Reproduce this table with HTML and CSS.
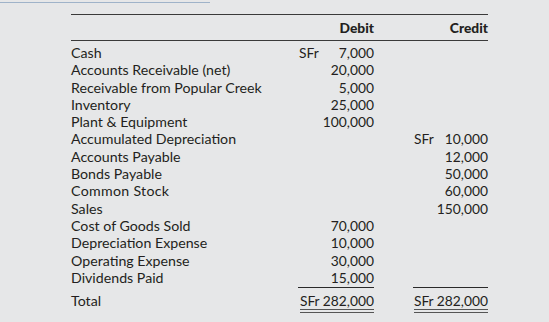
FILE: index.html
```html
<!DOCTYPE html>
<html>
<head>
<meta charset="utf-8">
<link rel="stylesheet" href="styles.css">
</head>
<body>
<div class="intro"><span class="intro-text">er, trial balance in SFr is as follows:</span></div>
<div class="ledger">
  <div class="row head">
    <div class="label"></div>
    <div class="amt hd">Debit</div>
    <div class="spacer"></div>
    <div class="amt hd">Credit</div>
  </div>
  <div class="body">
    <div class="row"><div class="label">Cash</div><div class="amt split"><span>SFr</span><span>7,000</span></div><div class="spacer"></div><div class="amt"></div></div>
    <div class="row"><div class="label">Accounts Receivable (net)</div><div class="amt">20,000</div><div class="spacer"></div><div class="amt"></div></div>
    <div class="row"><div class="label">Receivable from Popular Creek</div><div class="amt">5,000</div><div class="spacer"></div><div class="amt"></div></div>
    <div class="row"><div class="label">Inventory</div><div class="amt">25,000</div><div class="spacer"></div><div class="amt"></div></div>
    <div class="row"><div class="label">Plant &amp; Equipment</div><div class="amt">100,000</div><div class="spacer"></div><div class="amt"></div></div>
    <div class="row"><div class="label">Accumulated Depreciation</div><div class="amt"></div><div class="spacer"></div><div class="amt split"><span>SFr</span><span>10,000</span></div></div>
    <div class="row"><div class="label">Accounts Payable</div><div class="amt"></div><div class="spacer"></div><div class="amt">12,000</div></div>
    <div class="row"><div class="label">Bonds Payable</div><div class="amt"></div><div class="spacer"></div><div class="amt">50,000</div></div>
    <div class="row"><div class="label wide">Common Stock</div><div class="amt"></div><div class="spacer"></div><div class="amt">60,000</div></div>
    <div class="row"><div class="label">Sales</div><div class="amt"></div><div class="spacer"></div><div class="amt">150,000</div></div>
    <div class="row"><div class="label">Cost of Goods Sold</div><div class="amt">70,000</div><div class="spacer"></div><div class="amt"></div></div>
    <div class="row"><div class="label">Depreciation Expense</div><div class="amt">10,000</div><div class="spacer"></div><div class="amt"></div></div>
    <div class="row"><div class="label">Operating Expense</div><div class="amt">30,000</div><div class="spacer"></div><div class="amt"></div></div>
    <div class="row"><div class="label">Dividends Paid</div><div class="amt">15,000</div><div class="spacer"></div><div class="amt"></div></div>
  </div>
  <div class="row total">
    <div class="label">Total</div>
    <div class="amt sum"><span class="dbl">SFr 282,000</span></div>
    <div class="spacer"></div>
    <div class="amt sum credit-sum"><span class="dbl">SFr 282,000</span></div>
  </div>
</div>
</body>
</html>
```
FILE: styles.css
```css
html, body {
  margin: 0;
  padding: 0;
  background: #e6e7e8;
}
body {
  font-family: "Lato", "Open Sans", sans-serif;
  font-size: 14.2px;
  color: #231f20;
}
.intro {
  height: 3px;
  overflow: hidden;
}
.intro-text {
  display: inline-block;
  margin-top: -10px;
  font-family: "Liberation Serif", serif;
  font-weight: bold;
  font-size: 13.5px;
  line-height: 15px;
  background: #9fb3c9;
  color: #2b3440;
  padding-right: 4px;
}
.ledger {
  margin: 11px 0 0 71px;
  width: 417px;
  border-top: 1px solid #3a3a3a;
}
.row {
  display: grid;
  grid-template-columns: 227px 76px 39px 75px;
  line-height: 17.3px;
}
.head {
  border-bottom: 1px solid #3a3a3a;
  padding: 4px 0 4px;
  line-height: 17px;
}
.hd {
  font-weight: 900;
  text-align: center;
  font-size: 14.8px;
}
.body {
  padding-top: 3px;
}
.amt {
  text-align: right;
  font-size: 13.8px;
  white-space: nowrap;
}
.split {
  display: flex;
  justify-content: space-between;
  padding-left: 1px;
}
.wide {
  letter-spacing: 0.3px;
}
.total {
  margin-top: 1px;
  line-height: 14px;
}
.total .label {
  padding-top: 7px;
}
.sum {
  display: flex;
  justify-content: flex-end;
  border-top: 1px solid #2a2a2a;
  padding-top: 6px;
}
.dbl {
  display: inline-block;
  line-height: 14px;
  padding-bottom: 1px;
  border-bottom: 4px double #555;
}
```
